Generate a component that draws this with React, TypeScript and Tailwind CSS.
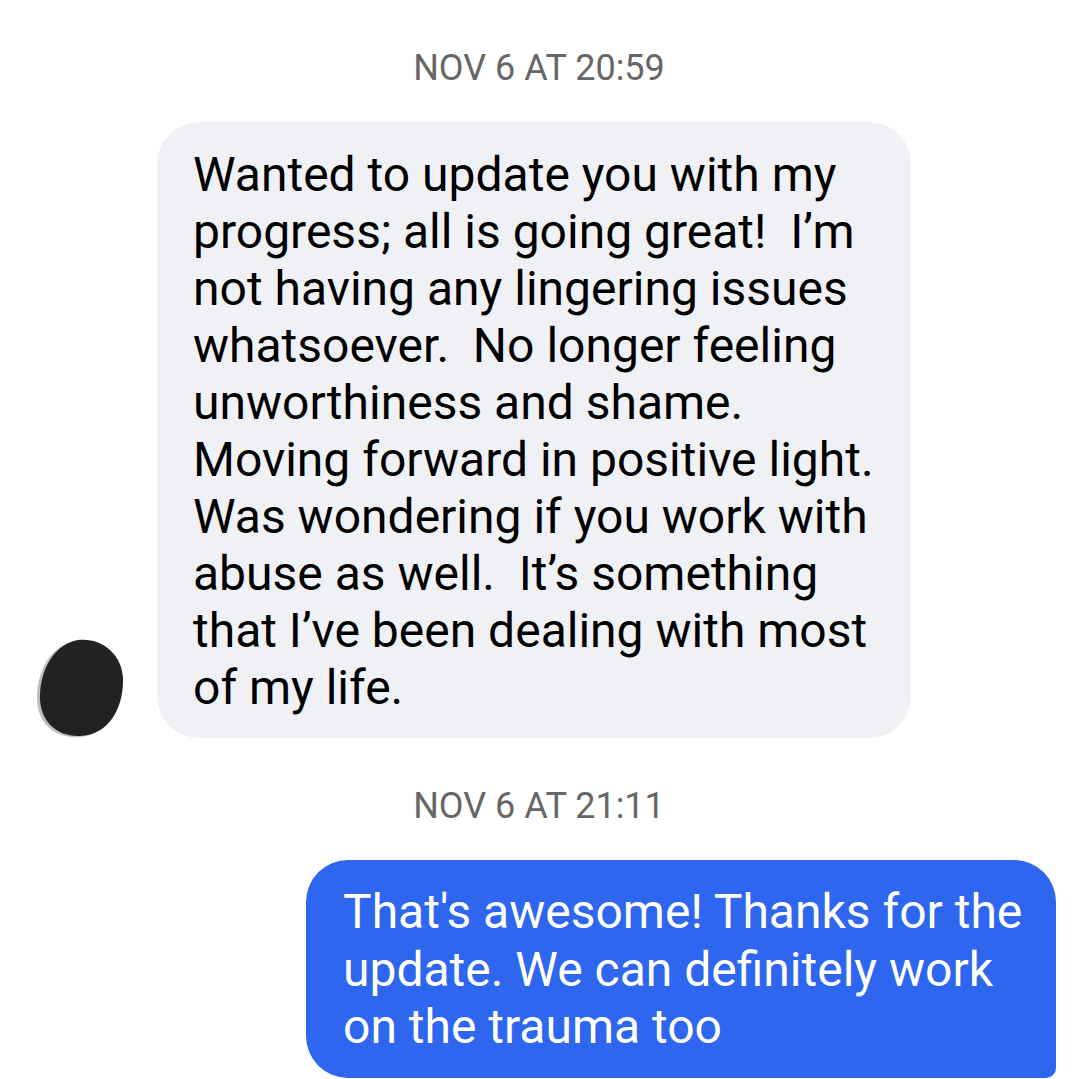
import React from 'react';

const font = { fontFamily: 'Roboto, "Noto Sans", sans-serif' };

const received = [
  'Wanted to update you with my',
  'progress; all is going great!  I’m',
  'not having any lingering issues',
  'whatsoever.  No longer feeling',
  'unworthiness and shame.',
  'Moving forward in positive light.',
  'Was wondering if you work with',
  'abuse as well.  It’s something',
  'that I’ve been dealing with most',
  'of my life.',
];

const sent = ['That\'s awesome! Thanks for the', 'update. We can definitely work', 'on the trauma too'];

const Timestamp: React.FC<{ text: string; className?: string }> = ({ text, className }) => (
  <div className={`text-center text-[36px] leading-[40px] text-[#666666] ${className ?? ''}`}>{text}</div>
);

const Avatar: React.FC = () => (
  <svg width="90" height="102" viewBox="0 0 90 102" className="shrink-0 -mb-[2px]">
    <path
      d="M40 3 C62 -1 84 14 86 38 C88 66 76 96 44 99 C18 101 0 84 1 58 C2 30 16 7 40 3 Z"
      fill="#b9bec4"
    />
    <path
      d="M42 2 C64 -1 86 15 87 40 C88 68 74 97 44 98 C20 99 3 82 4 57 C5 30 19 6 42 2 Z"
      fill="#222222"
    />
  </svg>
);

export default function App() {
  return (
    <div className="min-h-[1079px] w-[1078px] overflow-hidden bg-white pt-[48px]" style={font}>
      <Timestamp text="NOV 6 AT 20:59" />

      <div className="mt-[34px] flex items-end pl-[36px]">
        <Avatar />
        <div className="ml-[31px] w-[754px] rounded-[42px] bg-[#f0f1f5] pl-[36px] pr-4 pt-[24px] pb-[22px] text-[48px] leading-[57px] text-black">
          {received.map((line, i) => (
            <div key={i} className="whitespace-pre">
              {line}
            </div>
          ))}
        </div>
      </div>

      <Timestamp text="NOV 6 AT 21:11" className="mt-[48px]" />

      <div className="mt-[34px] flex justify-end pr-[22px]">
        <div className="w-[750px] rounded-[42px] rounded-br-[10px] bg-[#2e66ef] pl-[37px] pr-4 pt-[23px] pb-[22px] text-[48px] leading-[57.5px] text-white">
          {sent.map((line, i) => (
            <div key={i} className="whitespace-pre">
              {line}
            </div>
          ))}
        </div>
      </div>
    </div>
  );
}
